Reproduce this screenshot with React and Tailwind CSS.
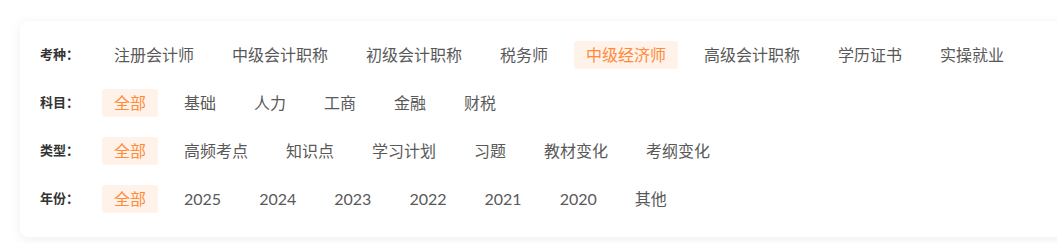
import { useState } from "react";

const filters = [
  {
    label: "考种",
    items: ["注册会计师", "中级会计职称", "初级会计职称", "税务师", "中级经济师", "高级会计职称", "学历证书", "实操就业"],
    active: 4,
  },
  { label: "科目", items: ["全部", "基础", "人力", "工商", "金融", "财税"], active: 0 },
  {
    label: "类型",
    items: ["全部", "高频考点", "知识点", "学习计划", "习题", "教材变化", "考纲变化"],
    active: 0,
  },
  {
    label: "年份",
    items: ["全部", "2025", "2024", "2023", "2022", "2021", "2020", "其他"],
    active: 0,
  },
];

function FilterRow({ label, items, active, onPick }) {
  return (
    <div className="flex items-center">
      <div className="w-[62px] shrink-0 text-[13px] font-bold text-[#333]">{label}：</div>
      <div className="flex items-center gap-[14px]">
        {items.map((item, i) => (
          <button
            key={item}
            onClick={() => onPick(i)}
            className={`h-7 px-3 rounded-[3px] text-[16px] leading-7 whitespace-nowrap ${
              i === active ? "bg-[#fff2e8] text-[#ff8a3d]" : "text-[#595959]"
            }`}
          >
            {item}
          </button>
        ))}
      </div>
    </div>
  );
}

export default function App() {
  const [picked, setPicked] = useState(filters.map((f) => f.active));

  return (
    <div
      className="w-[1057px] h-[243px] overflow-hidden bg-white pt-[21px] pl-5"
      style={{ fontFamily: 'Lato, "Noto Sans CJK SC", "Noto Sans", sans-serif' }}
    >
      <div className="w-[1060px] rounded-lg bg-white shadow-[0_2px_12px_rgba(0,0,0,0.07)] pl-5 pt-5 pb-6 flex flex-col gap-5">
        {filters.map((f, idx) => (
          <FilterRow
            key={f.label}
            label={f.label}
            items={f.items}
            active={picked[idx]}
            onPick={(i) => setPicked(picked.map((p, j) => (j === idx ? i : p)))}
          />
        ))}
      </div>
    </div>
  );
}
